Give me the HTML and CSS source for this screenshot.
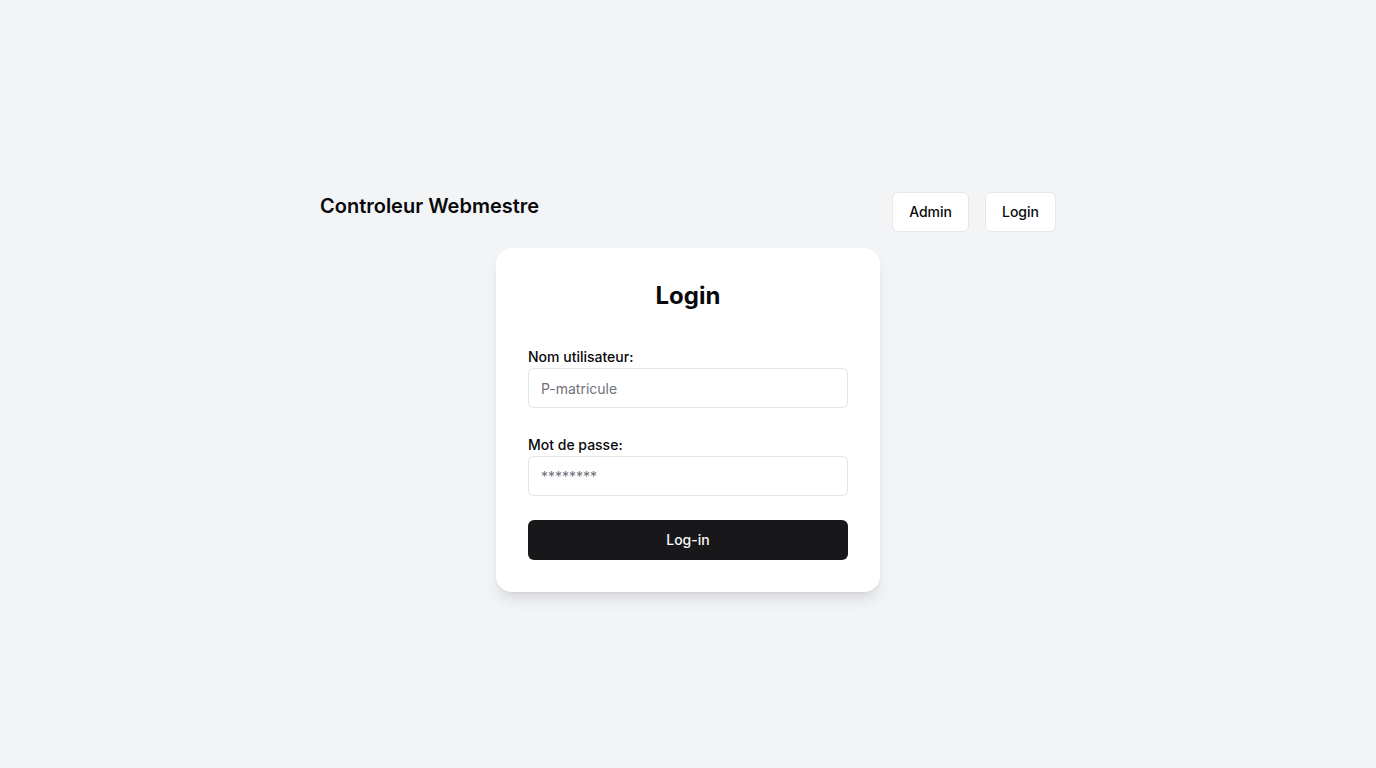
FILE: index.html
```html
<!DOCTYPE html>
<html lang="fr">
<head>
<meta charset="utf-8">
<title>Controleur Webmestre</title>
<link rel="stylesheet" href="styles.css">
</head>
<body>
<div class="page">
  <header class="header">
    <h1 class="brand">Controleur Webmestre</h1>
    <nav class="nav">
      <button class="nav-btn">Admin</button>
      <button class="nav-btn">Login</button>
    </nav>
  </header>
  <main class="card">
    <h2 class="card-title">Login</h2>
    <form class="form">
      <div class="field">
        <label class="label">Nom utilisateur:</label>
        <input class="input" type="text" placeholder="P-matricule">
      </div>
      <div class="field">
        <label class="label">Mot de passe:</label>
        <input class="input" type="text" placeholder="********">
      </div>
      <button type="button" class="submit">Log-in</button>
    </form>
  </main>
</div>
</body>
</html>
```
FILE: styles.css
```css
* { box-sizing: border-box; }
html, body { margin: 0; padding: 0; }
body {
  background: #f3f4f6;
  font-family: Inter, "Noto Sans", sans-serif;
  color: #09090b;
  min-height: 768px;
}
.page {
  padding-top: 192px;
  display: flex;
  flex-direction: column;
  align-items: center;
}
.header {
  width: 736px;
  display: flex;
  justify-content: space-between;
  align-items: flex-start;
  margin-bottom: 16px;
}
.brand {
  margin: 0;
  font-size: 20px;
  line-height: 28px;
  font-weight: 600;
}
.nav {
  display: flex;
  gap: 16px;
}
.nav-btn {
  height: 40px;
  padding: 0 16px 2px;
  background: #fff;
  border: 1px solid #e5e7eb;
  border-radius: 6px;
  font-family: inherit;
  font-size: 14px;
  font-weight: 500;
  color: #09090b;
}
.card {
  width: 384px;
  background: #fff;
  border-radius: 16px;
  padding: 32px;
  box-shadow: 0 10px 15px -3px rgba(0,0,0,0.1), 0 4px 6px -4px rgba(0,0,0,0.1);
}
.card-title {
  margin: 0 0 32px;
  text-align: center;
  font-size: 24px;
  line-height: 32px;
  font-weight: 700;
}
.form {
  display: flex;
  flex-direction: column;
  gap: 24px;
}
.field {
  display: flex;
  flex-direction: column;
}
.label {
  padding-top: 1px;
  font-size: 14px;
  line-height: 23px;
  font-weight: 450;
}
.input {
  height: 40px;
  width: 100%;
  padding: 0 12px;
  border: 1px solid #e4e4e7;
  border-radius: 6px;
  font-family: inherit;
  font-size: 14px;
  color: #09090b;
  outline: none;
}
.input::placeholder { color: #71717a; }
.submit {
  height: 40px;
  width: 100%;
  padding: 0 0 2px;
  border: none;
  border-radius: 6px;
  background: #18181b;
  color: #fafafa;
  font-family: inherit;
  font-size: 14px;
  font-weight: 500;
}
```
